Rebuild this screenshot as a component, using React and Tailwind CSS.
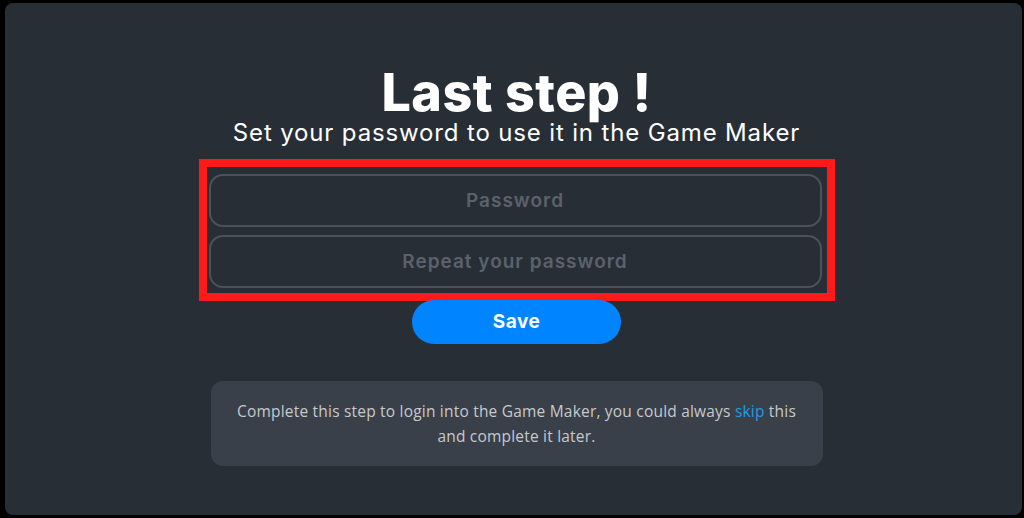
import React from "react";

const Field = ({ placeholder }) => (
  <input
    type="password"
    placeholder={placeholder}
    className="w-full h-[53px] rounded-[14px] border-2 border-[#4b525c] bg-transparent text-center text-[19px] font-semibold tracking-[1px] text-white placeholder:text-[#5b626c] outline-none"
  />
);

export default function App() {
  return (
    <div className="min-h-screen bg-black pt-[3px] pl-[5px] pr-[2px] pb-[3px]" style={{ fontFamily: "Inter, 'Noto Sans', sans-serif" }}>
      <div className="h-[512px] rounded-lg bg-[#282e36] flex flex-col items-center pt-[64px] pl-[6px]">
        <h1 className="text-[52px] leading-[52px] font-extrabold text-white tracking-[0.5px]">Last step !</h1>
        <p className="text-[24px] leading-[28px] tracking-[0.85px] text-white">Set your password to use it in the Game Maker</p>

        <div className="mt-[12px] w-[636px] border-[8px] border-[#ff1a1a] pt-[7px] pb-[5px] pl-[2px] pr-[5px] flex flex-col gap-[8px]">
          <Field placeholder="Password" />
          <Field placeholder="Repeat your password" />
        </div>

        <button className="-mt-[1px] w-[209px] h-[44px] rounded-full bg-[#0084ff] text-white text-[19px] font-bold tracking-[0.5px]">
          Save
        </button>

        <div className="mt-[37px] w-[612px] h-[85px] rounded-xl bg-[#3a4049] flex items-center justify-center text-center text-[15.5px] leading-[25px] tracking-[0.2px] text-[#c6c9cd]" style={{ fontFamily: "'Open Sans', sans-serif" }}>
          <p className="w-[565px]">
            Complete this step to login into the Game Maker, you could always{" "}
            <a href="#" className="text-[#1d9ee3]">skip</a> this and complete it later.
          </p>
        </div>
      </div>
    </div>
  );
}
